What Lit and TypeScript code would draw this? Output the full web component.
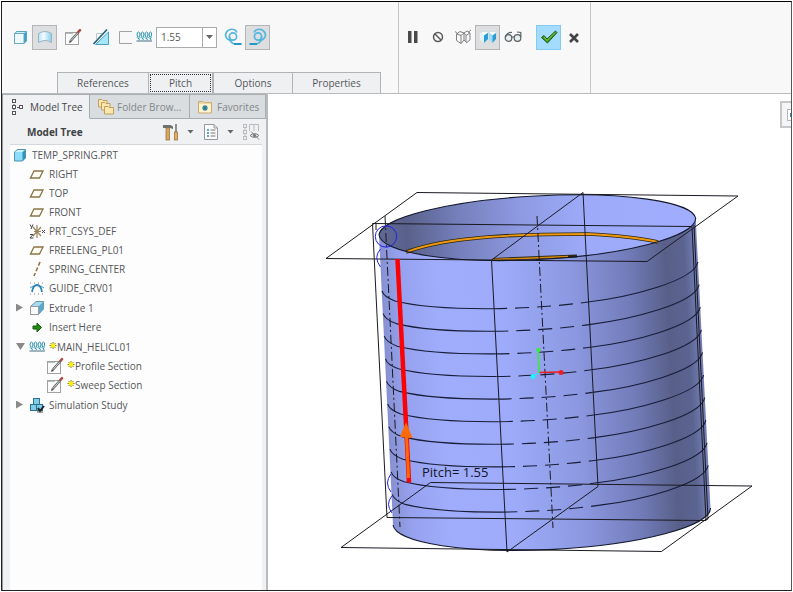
import { LitElement, html, svg, css, TemplateResult } from "lit";
import { customElement, property } from "lit/decorators.js";

const pencil = svg`
  <rect x="1.500" y="4.500" width="13" height="12" fill="#fdfdfd" stroke="#a2a2a2"/>
  <path d="M2 5.500H9" stroke="#bbb"/>
  <path d="M7 12.500L14.500 4" stroke="#59605f" stroke-width="2.400"/>
  <path d="M7.500 12L14 4.500" stroke="#d9dedb" stroke-width="1"/>
  <path d="M14.500 3.800L16 2.200" stroke="#b04a44" stroke-width="2.600" stroke-linecap="round"/>
  <path d="M5 15L5.800 12L8 13.800Z" fill="#444"/>`;

const helix = svg`
  <g fill="none" stroke="#2b93ae">
    <path d="M2 7Q2 4 3.500 4T5 7L3 11M6 7Q6 4 7.500 4T9 7L7 11M10 7Q10 4 11.500 4T13 7L11 11M14 7Q14 4 15.500 4T16.500 7L15 11"/>
    <path d="M2 7L4.500 12M6 7L8.500 12M10 7L12.500 12M14 7L16 12"/>
    <path d="M1.500 9.500H17" stroke="#8acbdc"/>
    <path d="M1.500 13H17" stroke="#3f6f80"/>
  </g>`;

const plane = svg`<path d="M2.500 13L6 6H15L11.500 13Z" fill="#fffdf4" stroke="#8a7445" stroke-width="1.300"/>`;

const spiral = svg`
  <g fill="none" stroke="#55b6de" stroke-width="1.700">
    <path d="M13 4.500C12 2 9 .800 6 1.500C2.500 2.500 .800 6 2 9C3 11.500 6 12.500 9 12"/>
    <circle cx="9" cy="8.500" r="3.600"/>
    <path d="M5.400 8.500Q5.400 15.500 11 16" />
    <path d="M10 16H17.500" stroke="#2596c6" stroke-width="2"/>
  </g>`;

const icons: Record<string, TemplateResult> = {
  solid: svg`
    <path d="M3.500 5.500L5.500 3.500H15.500V13L13 15.500H3.500Z" fill="#37a0c8" stroke="#5ba3be"/>
    <rect x="3.500" y="5.500" width="9.500" height="10" fill="#effaff" stroke="#6aaac4"/>
    <path d="M4 5L6 4H15L13 5Z" fill="#ccefff"/>`,
  surface: svg`
    <defs><linearGradient id="sf"><stop offset="0" stop-color="#b5e3f5"/><stop offset=".4" stop-color="#f4fbff"/><stop offset="1" stop-color="#85cfee"/></linearGradient></defs>
    <path d="M2.500 5.500Q9 1.500 15.500 5.500V14.500Q9 10.500 2.500 14.500Z" fill="url(#sf)" stroke="#9fb3bd"/>`,
  pencil,
  thicken: svg`
    <path d="M4.500 11V5.500H10" fill="none" stroke="#bcc6ca"/>
    <path d="M3.500 16.500L16.500 4V16.500Z" fill="#a5e6fb" stroke="#4d9fbd"/>
    <path d="M1.500 16L15 1.500" stroke="#1f5f78" stroke-width="1.600"/>`,
  bracket: svg`<path d="M15 3.500H2.500V15.500H15" fill="none" stroke="#a2a2a2"/>`,
  helix,
  plane,
  spiral,
  spiralFlip: svg`<g transform="translate(18 0) scale(-1 1)">${spiral}</g>`,
  pause: svg`<path d="M4 3H7.500V15H4ZM10 3H13.500V15H10Z" fill="#4a4a4a"/>`,
  none: svg`<circle cx="9" cy="9" r="4.500" fill="none" stroke="#5a5a5a" stroke-width="1.500"/><path d="M6 6L12 12" stroke="#5a5a5a" stroke-width="1.500"/>`,
  wire: svg`<g fill="none" stroke="#808080">
    <path d="M2.500 6L7 7.500V15.500L2.500 12.500ZM2.500 6L6 3.500L10 5L7 7.500M7 15.500L10 12V5"/>
    <path d="M10 5L12 7.500V14L10 12M12 7.500L16 5V12L12 15M10 5L13 3L16 5M1 3.500L4 6M14 4.500L17 2"/></g>`,
  shaded: svg`
    <path d="M1 5L4 3.500H9V5L5 7.500Z" fill="#fbfeff" stroke="#b9d4e0" stroke-width=".500"/><path d="M1 5L5 7.500V15L1 11.500Z" fill="#e2f5ff"/><path d="M5 7.500L9 5V11L5 15Z" fill="#2b9dd6"/>
    <path d="M10 5L12 3.500H17V5L13.500 7.500Z" fill="#fbfeff" stroke="#b9d4e0" stroke-width=".500"/><path d="M10 5L13.500 7.500V15L10 11.500Z" fill="#9bdcf8"/><path d="M13.500 7.500L17 5V11L13.500 15Z" fill="#2b9dd6"/>`,
  glasses: svg`<g fill="none" stroke="#5b6264" stroke-width="1.200">
    <circle cx="4.500" cy="10" r="3.300" fill="#e6eef0"/><circle cx="13.500" cy="10" r="3.300" fill="#e6eef0"/>
    <path d="M7.800 9.500Q9 8 10.200 9.500M1.500 9Q3 4 8 4.500M16.800 9V4.500L13 4"/></g>`,
  check: svg`<path d="M1.500 9.500L4 7.500L7 11L15.500 3L17 4.500L7.500 15Z" fill="#3f9626" stroke="#1f5d18"/><path d="M4 9L7 12.500L15 4.500" fill="none" stroke="#85c441"/>`,
  cross: svg`<path d="M5 6L13 14M13 6L5 14" stroke="#444" stroke-width="2.600"/>`,
  treeTab: svg`<g fill="#fff" stroke="#555"><path d="M5 6V7M5 11V12M8 9.500H10"/><rect x="3.500" y="1.500" width="3" height="3"/><rect x="3.500" y="7.500" width="3" height="3"/><rect x="3.500" y="13.500" width="3" height="3"/><rect x="10.500" y="7.500" width="3" height="3"/></g>`,
  folders: svg`<g fill="#fbe7ab" stroke="#c19f62">
    <path d="M2.500 9V1.500H6L7 2.500H11V9Z"/><path d="M5.500 12V4.500H9L10 5.500H14V12Z"/><path d="M8.500 16V8.500H12L13 9.500H17.500V16Z"/></g>`,
  favorites: svg`<path d="M2.500 15V3.500H7L8 4.500H15.500V15Z" fill="#fff2cd" stroke="#c9ab70"/><path d="M3 5H15" stroke="#d9bd80"/>
    <path d="M9 7V13M6 10H12M7 8L11 12M11 8L7 12" stroke="#247996" stroke-width="1.100"/>`,
  tools: svg`
    <path d="M1 2H8.500L11 3.500V6L8 5H1Z" fill="#6b7071"/><rect x="4" y="5" width="3.500" height="12" fill="#d6a85d" stroke="#9d7641" stroke-width=".800"/>
    <path d="M14 1V9" stroke="#777" stroke-width="1.600"/><rect x="12.500" y="9" width="3" height="8" fill="#e1b059" stroke="#9d7641" stroke-width=".800"/>`,
  listing: svg`<path d="M2.500 1.500H12L15.500 5V16.500H2.500Z" fill="#fbfbfb" stroke="#929a9d"/><path d="M12 1.500V5H15.500" fill="none" stroke="#929a9d"/>
    <path d="M5 7H7M5 10H7M5 13H7" stroke="#2d8cb0" stroke-width="1.600"/><path d="M8.500 7H13.500M8.500 10H13.500M8.500 13H13.500" stroke="#777"/>`,
  hidden: svg`<g fill="none" stroke="#b9bcbe"><rect x="1.500" y="1.500" width="3" height="3"/><rect x="1.500" y="7.500" width="3" height="3"/><rect x="1.500" y="13.500" width="3" height="3"/><path d="M7.500 1.500H16.500V8M7.500 1.500V8M12 1.500V8M3 5V7M3 11V13"/></g>
    <path d="M8 12.500Q12.500 8.500 17 12.500Q12.500 16.500 8 12.500ZM9 8.500L17 16.500" fill="#ddd" stroke="#858585"/><circle cx="12.500" cy="12.500" r="1.500" fill="#777"/>`,
  part: svg`
    <path d="M3.500 6L6.500 3.500H14.500V12L11.500 15H3.500Z" fill="#2c93ba" stroke="#4d95ae"/><path d="M4 6H11.500V14.500H4Z" fill="#8edcf7"/><path d="M4 6L6.500 4H14L11.500 6Z" fill="#cbf1ff"/>`,
  csys: svg`<path d="M9 3V16M5 5L13 14M13 5L5 14M6 9.500H13" stroke="#98855f" stroke-width="1.200"/><path d="M2 2.500L3.500 5M5 2.500L3 7M2 12.500H5L2 16H5.500M14 8L17 11M17 8L14 11" fill="none" stroke="#444"/>`,
  axis: svg`<path d="M12 2L6 16" stroke="#8d7343" stroke-width="1.600" stroke-dasharray="4 2"/>`,
  curve: svg`<path d="M4 13Q5 6 9 6Q13 6 14 13" fill="none" stroke="#2b86b3" stroke-width="1.800"/><path d="M2 4H17M2 15H17" stroke="#888" stroke-dasharray="1 3"/><path d="M2 9L5 7M16 9L13 7" stroke="#3d9ac3"/>`,
  extrude: svg`<path d="M2.500 7.500L8 2.500H15.500V10L10.500 15.500H2.500Z" fill="#a6dbef" stroke="#7194a1"/><path d="M10.500 7.500L15.500 2.500V10L10.500 15.500Z" fill="#5ba9c9"/><rect x="2.500" y="7.500" width="8" height="8" fill="#fbfbfb" stroke="#9a9a9a"/>`,
  arrow: svg`<path d="M5 8H9V5L13.500 9.500L9 14V11H5Z" fill="#218c12" stroke="#17580f"/>`,
  study: svg`<g fill="#7fcbe8" stroke="#2b728d"><rect x="5.500" y="2.500" width="6" height="6"/><rect x="2.500" y="8.500" width="6" height="6"/><rect x="8.500" y="8.500" width="6" height="6"/></g><path d="M10 12L12 15L16 10" fill="none" stroke="#222" stroke-width="2"/><path d="M9 16H15" stroke="#555"/>`,
};

const icon = (name: string) =>
  html`<svg class="icon" viewBox="0 0 18 18" aria-hidden="true">${icons[name]}</svg>`;

const iconCss = css`
  * { box-sizing: border-box; }
  .icon { display: block; flex: none; width: 18px; height: 18px; }
  button { font: inherit; color: inherit; background: none; border: 0; padding: 0; margin: 0; }
`;

@customElement("model-view")
class ModelView extends LitElement {
  static styles = css`
    :host { display: block; }
    svg { display: block; width: 100%; height: 100%; }
    .line { fill: none; stroke: #1a1a22; stroke-width: 1; }
    .edge { fill: none; stroke: #14182c; stroke-width: 1.1; }
    .ring { fill: none; stroke: #181d38; stroke-width: 1.1; }
    .dash { stroke-dasharray: 14 8; }
    .axis { stroke-dasharray: 9 3 2 3; }
    .blue { fill: none; stroke: #2020e8; }
    .label { font: 13px "Open Sans", sans-serif; fill: #14161f; white-space: pre; }
  `;

  render() {
    const rings = Array.from({ length: 10 }, (_, i) => svg`
      <g transform="translate(${i * 1.13} ${i * 22.6})">
        <path class="ring" d="M382 291Q384 297 395 301C415 306 450 309 493 308.700"/>
        <path class="ring dash" d="M493 308.700Q545 308 588 302"/>
        <path class="ring" d="M588 302C630 297 694 281 698 262"/>
      </g>`);
    return html`
      <svg viewBox="268 94 523 496" preserveAspectRatio="xMinYMin meet" role="img" aria-label="Spring model">
        <defs>
          <linearGradient id="outer" gradientUnits="userSpaceOnUse" x1="379" y1="235" x2="695" y2="219">
            <stop offset="0" stop-color="#8791d2"/>
            <stop offset=".06" stop-color="#96a2ef"/>
            <stop offset=".18" stop-color="#a0adfc"/>
            <stop offset=".38" stop-color="#9dabfa"/>
            <stop offset=".6" stop-color="#8c98e0"/>
            <stop offset=".78" stop-color="#727cb9"/>
            <stop offset=".9" stop-color="#586089"/>
            <stop offset=".96" stop-color="#5b6490"/>
            <stop offset="1" stop-color="#7580b8"/>
          </linearGradient>
          <linearGradient id="inner" gradientUnits="userSpaceOnUse" x1="379" y1="235" x2="695" y2="219">
            <stop offset="0" stop-color="#5f6795"/>
            <stop offset=".09" stop-color="#59618b"/>
            <stop offset=".25" stop-color="#757fbb"/>
            <stop offset=".45" stop-color="#8e9ae2"/>
            <stop offset=".65" stop-color="#9caaf9"/>
            <stop offset="1" stop-color="#a1aeff"/>
          </linearGradient>
        </defs>

        <path d="M379 235L393 525A159 33.500 -3 0 0 710.500 508L695.700 218.500A158.600 32.500 -3 0 1 379 235Z" fill="url(#outer)"/>
        <path class="edge" d="M393 525A159 33.500 -3 0 0 710.500 508"/>
        <path d="M379 235A158.600 31.500 -3 0 1 695.700 218.500A158.600 33.500 -3 0 1 379 235Z" fill="url(#inner)"/>

        <path d="M406 252C450 236 520 234 587 234Q630 236 658 242" fill="none" stroke="#2c2612" stroke-width="3.500"/>
        <path d="M406 252C450 236 520 234 587 234Q630 236 658 242" fill="none" stroke="#ed990f" stroke-width="1.800"/>
        <path d="M493 259.500L577 256" stroke="#2c2612" stroke-width="3"/>
        <path d="M493 259.500L568 256.500" stroke="#d8890c" stroke-width="1.500"/>
        <path class="edge" d="M379 235A158.600 31.500 -3 0 1 695.700 218.500A158.600 33.500 -3 0 1 379 235Z"/>

        ${rings}

        <path class="line" d="M417 192.500L738 196L647 261.500L326 258.500Z"/>
        <path class="line" d="M430.500 482.500L752 486L661.500 551.500L341 547.500Z"/>
        <path class="line" d="M372.500 223.500L692 226.500L706 520.500L387 517.500Z"/>
        <path class="line" d="M376 223.500V230M694 225L708 519L703 521"/>
        <path class="line" d="M583 192.500L491.500 260L507 552L598 486.500Z"/>
        <path class="line axis" d="M537 216L553 528"/>
        <path class="line axis" d="M385 216L400 527"/>

        <circle class="blue" cx="386" cy="236.500" r="10.700"/>
        <path class="blue" d="M380.500 249Q373 257 380.500 267M391 474Q384 483 391 492M392 496Q385 504 392 513"/>

        <path d="M397.500 259L409 482.500" stroke="#fb0306" stroke-width="4.500"/>
        <path d="M406.500 436L408.500 478" stroke="#ff6a08" stroke-width="3"/>
        <path d="M406 422L412.500 438L400 437Z" fill="#ff6a08"/>

        <path d="M539 372.500L561 372" stroke="#f01c22" stroke-width="1.500"/>
        <circle cx="561" cy="372.500" r="2.500" fill="#f01c22"/>
        <path d="M539 373L538 350" stroke="#30f030" stroke-width="1.500"/>
        <circle cx="538.500" cy="350" r="2" fill="#30f030"/>
        <path d="M539 373L533 376" stroke="#20f0f8"/>
        <circle cx="533" cy="376.500" r="2.500" fill="#20f0f8"/>
        <text class="label" x="422" y="477">Pitch= 1.55</text>
      </svg>`;
  }
}

interface Node { label: string; icon: string; mark?: boolean; open?: boolean; group?: boolean; children?: Node[]; }

const nodes: Node[] = [
  { label: "RIGHT", icon: "plane" },
  { label: "TOP", icon: "plane" },
  { label: "FRONT", icon: "plane" },
  { label: "PRT_CSYS_DEF", icon: "csys" },
  { label: "FREELENG_PL01", icon: "plane" },
  { label: "SPRING_CENTER", icon: "axis" },
  { label: "GUIDE_CRV01", icon: "curve" },
  { label: "Extrude 1", icon: "extrude", group: true },
  { label: "Insert Here", icon: "arrow" },
  {
    label: "MAIN_HELICL01", icon: "helix", mark: true, group: true, open: true,
    children: [
      { label: "Profile Section", icon: "pencil", mark: true },
      { label: "Sweep Section", icon: "pencil", mark: true },
    ],
  },
  { label: "Simulation Study", icon: "study", group: true },
];

@customElement("model-tree")
class ModelTree extends LitElement {
  static styles = [iconCss, css`
    :host { display: flex; flex: 1; padding: 0 4px 0 7px; background: #eff1f3; }
    ul { list-style: none; margin: 0; padding: 0; }
    .root { flex: 1; background: #fdfdfd; border-top: 1px solid #d5d8da; }
    .nested { padding-left: 18px; }
    .row { display: flex; align-items: center; height: 19px; white-space: nowrap; padding-left: 18px; }
    .top { padding-left: 1px; }
    .toggled { padding-left: 6px; }
    .group { margin-top: 1px; }
    .toggle { width: 12px; height: 19px; display: grid; align-items: center; }
    .tri { width: 7px; height: 8px; background: #8a8a8a; clip-path: polygon(0 0, 100% 50%, 0 100%); }
    .open { width: 9px; height: 7px; clip-path: polygon(0 0, 100% 0, 50% 100%); }
    .icon { margin-right: 3px; }
    .mark { width: 8px; height: 9px; margin-bottom: 3px; }
  `];

  row(n: Node): TemplateResult {
    return html`<li class=${n.group ? "group" : ""}>
      <div class="row ${n.group ? "toggled" : ""}">
        ${n.group ? html`<button class="toggle" aria-label="Toggle ${n.label}"><span class="tri ${n.open ? "open" : ""}"></span></button>` : ""}
        ${icon(n.icon)}
        ${n.mark ? html`<svg class="mark" viewBox="0 0 8 9"><path d="M4 1V8M.500 4.500H7.500M1.500 2L6.500 7M6.500 2L1.500 7" stroke="#77752a"/><circle cx="4" cy="4.500" r="2.200" fill="#fbf000"/></svg>` : ""}
        <span>${n.label}</span>
      </div>
      ${n.children ? html`<ul class="nested">${n.children.map((c) => this.row(c))}</ul>` : ""}
    </li>`;
  }

  render() {
    return html`<ul class="root">
      <li>
        <div class="row top">${icon("part")}<span>TEMP_SPRING.PRT</span></div>
        <ul>${nodes.map((n) => this.row(n))}</ul>
      </li>
    </ul>`;
  }
}

@customElement("tool-button")
class ToolButton extends LitElement {
  @property() icon = "";
  @property() label = "";
  @property() look = "";

  static styles = [iconCss, css`
    :host { display: block; }
    button { display: grid; place-items: center; width: 25px; height: 25px; border: 1px solid transparent; }
    .active { background: #dcdee0; border-color: #b3b5b7; }
    .accept { background: #a3dcff; border-color: #84c9f2; }
  `];

  render() {
    return html`<button class=${this.look} aria-label=${this.label} title=${this.label}>${icon(this.icon)}</button>`;
  }
}

const tool = (name: string, label: string, look = "") =>
  html`<tool-button icon=${name} label=${label} look=${look}></tool-button>`;

@customElement("app-root")
class AppRoot extends LitElement {
  static styles = [iconCss, css`
    :host { display: block; padding: 1px; font: 10px/16px "Open Sans", "Noto Sans", sans-serif; color: #55575a; background: #fff; }
    .frame { display: flex; flex-direction: column; min-height: calc(100vh - 2px); border: 1px solid #222; border-top-color: #000; border-right-color: #555; }
    .ribbon { display: flex; background: #f8f8f8; border-bottom: 1px solid #b9bbbc; }
    .settings { flex: 0 1 397px; display: flex; flex-direction: column; border-right: 1px solid #c4c6c8; }
    .bar { display: flex; align-items: center; height: 70px; padding-left: 5px; gap: 3px; }
    .pair { display: flex; }
    .glyphs { display: flex; padding-left: 1px; }
    .combo { display: flex; width: 61px; height: 21px; border: 1px solid #a9abac; background: #fff; }
    .combo input { min-width: 0; flex: 1; border: 0; padding: 0 4px; font: inherit; color: inherit; background: none; outline: 0; }
    .drop { width: 14px; border-left: 1px solid #a9abac; display: grid; place-items: center; }
    .caret { width: 7px; height: 4px; background: #666; clip-path: polygon(0 0, 100% 0, 50% 100%); }
    .tabs { display: flex; padding-left: 55px; }
    .tab { height: 21px; padding: 0; background: #eef0f2; border: 1px solid #b1b3b5; border-width: 1px 1px 0 0; }
    .tab:first-child { border-left-width: 1px; }
    .w92 { width: 92px; }
    .w65 { width: 65px; }
    .w79 { width: 79px; }
    .w88 { width: 88px; }
    .focus { padding: 1px; border-right-width: 2px; }
    .focus span { display: block; height: 100%; border: 1px dotted #333; line-height: 16px; }
    .confirm { flex: 0 0 192px; display: flex; border-right: 1px solid #c4c6c8; }
    .confirm .bar { padding-left: 1px; gap: 0; }
    .accept { display: flex; padding-left: 11px; }
    .work { flex: 1; display: flex; }
    .side { flex: 0 0 266px; display: flex; flex-direction: column; border-left: 1px solid #999; border-right: 2px solid #b9bbbc; }
    .panels { display: flex; height: 25px; background: #eff1f3; }
    .panel { display: flex; align-items: center; gap: 1px; padding-left: 6px; white-space: nowrap; background: #d9dddf; color: #83878a; border: 1px solid #a8adaf; border-left-width: 0; }
    .panel span { padding-left: 2px; }
    .current { background: #eff1f3; color: #45474a; border-bottom-color: #eff1f3; width: 87px; }
    .files { width: 100px; }
    .fav { flex: 1; }
    .title { display: flex; align-items: center; height: 25px; padding: 0 6px 0 24px; background: #eff1f3; }
    h2 { flex: 1; margin: 0; font-size: 10px; line-height: 16px; color: #404245; }
    .title button { height: 20px; display: flex; align-items: center; gap: 7px; margin-left: 8px; }
    .view { flex: 1; position: relative; background: #fff; }
    .flyout { position: absolute; right: 0; top: 7px; width: 11px; height: 27px; background: #f4f5f6; border: 2px solid #c5c7c8; border-right: 0; overflow: hidden; display: flex; align-items: center; padding-left: 5px; }
    .flyout i { flex: none; width: 12px; height: 12px; border: 1px solid #b5b7b8; background: #fff; display: grid; align-items: center; }
    .flyout b { width: 5px; height: 4px; margin-left: 2px; background: #2f8db8; }
  `];

  render() {
    return html`
      <div class="frame">
        <header class="ribbon">
          <div class="settings">
            <div class="bar">
              <div class="pair">${tool("solid", "Solid")}${tool("surface", "Surface", "active")}</div>
              ${tool("pencil", "Edit section")}
              ${tool("thicken", "Remove material")}
              <div class="glyphs">${icon("bracket")}${icon("helix")}</div>
              <div class="combo">
                <input aria-label="Pitch value" value="1.55" />
                <button class="drop" aria-label="Recent values"><span class="caret"></span></button>
              </div>
              <div class="pair">${tool("spiral", "Left handed")}${tool("spiralFlip", "Right handed", "active")}</div>
            </div>
            <nav class="tabs">
              <button class="tab w92">References</button>
              <button class="tab w65 focus"><span>Pitch</span></button>
              <button class="tab w79">Options</button>
              <button class="tab w88">Properties</button>
            </nav>
          </div>
          <div class="confirm">
            <div class="bar">
              ${tool("pause", "Pause")}${tool("none", "No preview")}${tool("wire", "Unattached preview")}
              ${tool("shaded", "Attached preview", "active")}${tool("glasses", "Verify")}
              <div class="accept">${tool("check", "Accept", "accept")}${tool("cross", "Cancel")}</div>
            </div>
          </div>
        </header>
        <main class="work">
          <aside class="side">
            <div class="panels">
              <button class="panel current">${icon("treeTab")}<span>Model Tree</span></button>
              <button class="panel files">${icon("folders")}<span>Folder Brow...</span></button>
              <button class="panel fav">${icon("favorites")}<span>Favorites</span></button>
            </div>
            <div class="title">
              <h2>Model Tree</h2>
              <button aria-label="Tree settings">${icon("tools")}<span class="caret"></span></button>
              <button aria-label="Tree display">${icon("listing")}<span class="caret"></span></button>
              <button aria-label="Hidden items">${icon("hidden")}</button>
            </div>
            <model-tree></model-tree>
          </aside>
          <section class="view">
            <model-view></model-view>
            <button class="flyout" aria-label="Open view toolbar"><i><b></b></i></button>
          </section>
        </main>
      </div>`;
  }
}
